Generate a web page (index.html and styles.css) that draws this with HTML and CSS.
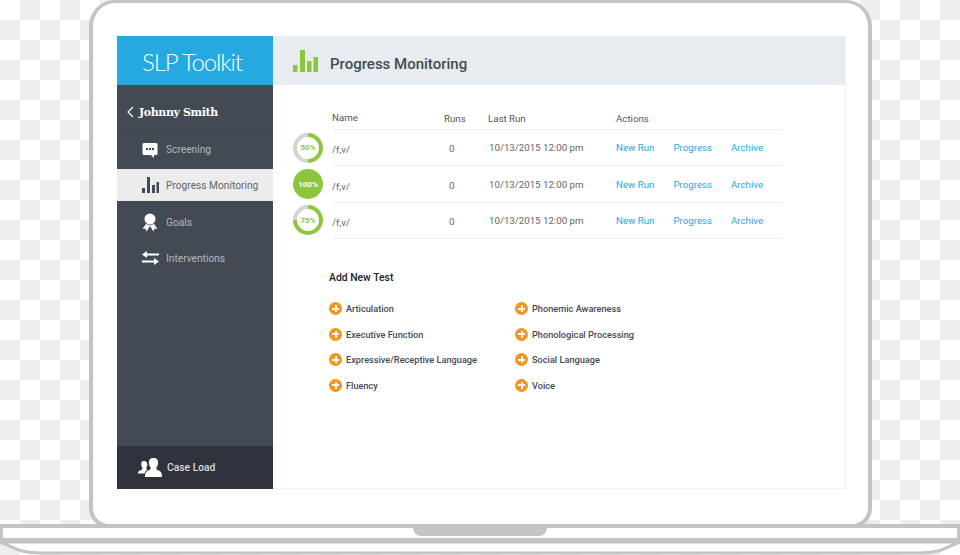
FILE: index.html
```html
<!DOCTYPE html>
<html lang="en">
  <head>
    <meta charset="UTF-8" />
    <title>SLP Toolkit</title>
    <link rel="stylesheet" href="styles.css">
  </head>
  <body>
    <div class="lid">
      <div class="screen">
        <aside class="sidebar">
          <div class="logo">SLP Toolkit</div>
          <div class="patient">
            <svg class="chevron" viewBox="0 0 7 12"><path d="M6 1 1 6l5 5" /></svg>
            <span>Johnny Smith</span>
          </div>
          <nav class="nav">
            <a class="nav-item nav-first">
              <span class="nav-icon">
                <svg width="16" height="16" viewBox="0 0 16 16"><path fill="#fff" d="M2 1h12a1.500 1.500 0 0 1 1.500 1.500v9A1.500 1.500 0 0 1 14 13h-2v3l-3-3H2A1.500 1.500 0 0 1 .5 11.500v-9A1.500 1.500 0 0 1 2 1z" /><path fill="#434a54" d="M4 6h2v2H4zM7 6h2v2H7zM10 6h2v2h-2z" /></svg>
              </span>
              Screening
            </a>
            <a class="nav-item active">
              <span class="nav-icon">
                <svg width="17" height="16" viewBox="0 0 17 16"><path fill="#434a54" d="M0 11h3v5H0zM5 0h3v16H5zM10 8h3v8h-3zM14.500 5h2.500v11h-2.500z" /></svg>
              </span>
              Progress Monitoring
            </a>
            <a class="nav-item">
              <span class="nav-icon">
                <svg width="16" height="19" viewBox="0 0 16 19"><circle cx="8" cy="6" r="5.500" fill="#fff" /><path fill="#fff" d="M4 11 .5 16l3-.5 1 3L8 13l3.500 5.500 1-3 3 .5L12 11l-4 1.500z" /></svg>
              </span>
              Goals
            </a>
            <a class="nav-item">
              <span class="nav-icon">
                <svg width="17" height="14" viewBox="0 0 17 14"><path fill="#fff" d="M5 0v2.500h12v2H5V7L0 3.500zM12 7v2.500H0v2h12V14l5-3.500z" /></svg>
              </span>
              Interventions
            </a>
          </nav>
          <div class="caseload">
            <svg width="24" height="19" viewBox="0 0 24 19"><path fill="#fff" d="M5.500 3C3.500 3 3 5 3.300 7c.2 1.500.7 2.500 1.200 3 0 1-.5 1.500-2 2.200C1 12.800 0 13.500 0 15.500h6.500c.5-1.800 1.500-2.700 3-3.400-1-.8-1.300-1.300-1.300-2.100.6-.7 1-1.700 1.100-3 .1-2-.8-4-3.800-4z" /><path fill="#fff" d="M15 0c-3 0-4.300 2.300-4.100 5 .2 2 .8 3.600 1.800 4.600.2 1.500-.6 2.300-2.300 3C8.500 13.400 7 14.500 7 19h17c0-4.500-1.500-5.600-3.400-6.400-1.700-.7-2.500-1.500-2.300-3 1-1 1.600-2.600 1.800-4.600.2-2.700-1.100-5-4.100-5z" /></svg>
            <span>Case Load</span>
          </div>
        </aside>

        <main class="content">
          <header class="content-head">
            <svg width="25" height="22" viewBox="0 0 25 22"><path fill="#8cc63f" d="M0 15h4.500v7H0zM7 0h5v22H7zM14 11h4.500v11H14zM20.500 7H25v15h-4.500z" /></svg>
            <h1>Progress Monitoring</h1>
          </header>

          <div class="content-body">
            <table class="tests">
              <thead>
                <tr>
                  <th class="col-ring"></th>
                  <th class="col-name">Name</th>
                  <th class="col-runs">Runs</th>
                  <th class="col-date">Last Run</th>
                  <th class="col-actions">Actions</th>
                </tr>
              </thead>
              <tbody>
                <tr>
                  <td class="col-ring"><span class="ring ring-50"><span>50%</span></span></td>
                  <td class="col-name">/f,v/</td>
                  <td class="col-runs">0</td>
                  <td class="col-date">10/13/2015 12:00 pm</td>
                  <td class="col-actions"><a>New Run</a><a>Progress</a><a>Archive</a></td>
                </tr>
                <tr>
                  <td class="col-ring"><span class="ring ring-100"><span>100%</span></span></td>
                  <td class="col-name">/f,v/</td>
                  <td class="col-runs">0</td>
                  <td class="col-date">10/13/2015 12:00 pm</td>
                  <td class="col-actions"><a>New Run</a><a>Progress</a><a>Archive</a></td>
                </tr>
                <tr>
                  <td class="col-ring"><span class="ring ring-75"><span>75%</span></span></td>
                  <td class="col-name">/f,v/</td>
                  <td class="col-runs">0</td>
                  <td class="col-date">10/13/2015 12:00 pm</td>
                  <td class="col-actions"><a>New Run</a><a>Progress</a><a>Archive</a></td>
                </tr>
              </tbody>
            </table>

            <h2>Add New Test</h2>
            <ul class="add-list">
              <li><span class="plus"></span>Articulation</li>
              <li><span class="plus"></span>Phonemic Awareness</li>
              <li><span class="plus"></span>Executive Function</li>
              <li><span class="plus"></span>Phonological Processing</li>
              <li><span class="plus"></span>Expressive/Receptive Language</li>
              <li><span class="plus"></span>Social Language</li>
              <li><span class="plus"></span>Fluency</li>
              <li><span class="plus"></span>Voice</li>
            </ul>
          </div>
        </main>
      </div>
    </div>

    <div class="base">
      <div class="notch"></div>
    </div>
    <svg class="lip" width="960" height="13" viewBox="0 0 960 13">
      <path d="M0 0 20 8.500Q29 11 40 11H920Q931 11 940 8.500L960 0Z" />
    </svg>
  </body>
</html>
```

FILE: styles.css
```css
html,
body {
  height: 555px;
}

body {
  margin: 0;
  overflow: hidden;
  font-family: Roboto, "Liberation Sans", sans-serif;
  background: repeating-conic-gradient(#eee 0 25%, #fff 0 50%) 0 0 / 40px 40px;
  color: #434a54;
}

/* laptop frame */
.lid {
  box-sizing: border-box;
  width: 783px;
  height: 528px;
  margin-left: 89px;
  padding: 33px 0 0 24px;
  background: #fff;
  border: 4px solid #c4c4c4;
  border-top-width: 3px;
  border-radius: 26px 26px 20px 20px;
}

.base {
  box-sizing: border-box;
  display: flex;
  justify-content: center;
  height: 18px;
  margin-top: -4px;
  background: #fff;
  border: 4px solid #c4c4c4;
  border-left-width: 3px;
  border-right-width: 3px;
}

.notch {
  width: 134px;
  height: 8px;
  background: #c4c4c4;
  border-radius: 0 0 8px 8px;
}

.lip {
  display: block;
}

.lip path {
  fill: #fff;
  stroke: #c4c4c4;
  stroke-width: 3;
}

.screen {
  display: flex;
  width: 729px;
  height: 453px;
}

/* sidebar */
.sidebar {
  display: flex;
  flex-direction: column;
  width: 156px;
  background: #434a54;
}

.logo {
  box-sizing: border-box;
  height: 49px;
  padding-right: 6px;
  background: #25a9e0;
  color: #fff;
  font-family: Lato, sans-serif;
  font-weight: 300;
  font-size: 24px;
  letter-spacing: -1.100px;
  line-height: 52px;
  text-align: center;
}

.patient {
  box-sizing: border-box;
  display: flex;
  align-items: center;
  gap: 5px;
  height: 48px;
  padding: 7px 0 0 10px;
  border-bottom: 1px solid #3e454e;
  color: #fff;
  font-family: "DejaVu Serif", serif;
  font-weight: 700;
  font-size: 11px;
  letter-spacing: -0.400px;
}

.chevron {
  width: 7px;
  height: 12px;
  fill: none;
  stroke: #fff;
  stroke-width: 1.200;
}

.nav {
  display: flex;
  flex-direction: column;
}

.nav-item {
  display: flex;
  align-items: center;
  height: 36px;
  padding-left: 24px;
  font-size: 10.200px;
  color: #b4b8bd;
}

.nav-first {
  box-sizing: border-box;
  padding-bottom: 3px;
}

.nav-icon {
  display: flex;
  justify-content: center;
  width: 18px;
  margin-right: 7px;
}

.nav-item.active {
  height: 32px;
  margin-bottom: 3px;
  background: #ececec;
  color: #60666e;
}

.caseload {
  display: flex;
  align-items: center;
  gap: 5px;
  height: 43px;
  margin-top: auto;
  padding-left: 21px;
  background: #2e333d;
  color: #ddd;
  font-size: 10.300px;
  font-weight: 500;
}

/* main area */
.content {
  display: flex;
  flex-direction: column;
  flex: 1;
  border-right: 1px solid #f1f1f1;
  border-bottom: 1px solid #f1f1f1;
}

.content-head {
  display: flex;
  align-items: center;
  gap: 12px;
  height: 49px;
  padding-left: 20px;
  background: #e6ecef;
}

.content-head h1 {
  margin: 6px 0 0;
  font-size: 15px;
  font-weight: 500;
}

.content-body {
  padding: 20px 0 0 20px;
}

.tests {
  width: 490px;
  border-collapse: separate;
  border-spacing: 0;
  table-layout: fixed;
  font-size: 9.700px;
}

.tests th {
  box-sizing: border-box;
  height: 25px;
  padding: 2px 0 0;
  font-weight: 400;
  text-align: left;
  color: #555;
  border-bottom: 1px solid #eee;
}

.tests td {
  box-sizing: border-box;
  height: 36.400px;
  padding: 0;
  color: #666;
  border-bottom: 1px solid #eee;
}

.tests .col-ring {
  width: 39px;
  border: 0;
}

.col-name {
  width: 112px;
}

.col-runs {
  width: 44px;
}

.col-date {
  width: 128px;
}

.tests td.col-name {
  padding-top: 4px;
}

.tests th.col-name {
  padding: 0;
}

.tests td.col-runs {
  padding: 2px 0 0 5px;
}

.tests td.col-date {
  padding-left: 1px;
}

.col-actions {
  white-space: nowrap;
}

.col-actions a {
  display: inline-block;
  width: 57.500px;
  color: #25a9e0;
}

.ring {
  display: flex;
  align-items: center;
  justify-content: center;
  width: 30px;
  height: 30px;
  margin-top: -1px;
  border-radius: 50%;
}

.ring span {
  display: flex;
  align-items: center;
  justify-content: center;
  width: 22px;
  height: 22px;
  border-radius: 50%;
  background: #fff;
  color: #8cc63f;
  font-size: 8px;
  font-weight: 700;
}

.ring-50 {
  background: conic-gradient(#8cc63f 50%, #d4d4d4 0);
}

.ring-75 {
  background: conic-gradient(#8cc63f 75%, #d4d4d4 0);
}

.ring-100 {
  background: #8cc63f;
}

.ring-100 span {
  background: transparent;
  color: #fff;
}

/* add new test */
.content-body h2 {
  margin: 32px 0 0 36px;
  font-size: 10.400px;
  font-weight: 500;
  line-height: 13px;
  color: #222;
}

.add-list {
  display: grid;
  grid-template-columns: 186px 1fr;
  grid-auto-rows: 25.500px;
  margin: 12px 0 0 36px;
  padding: 0;
  list-style: none;
  font-size: 9.200px;
  font-weight: 500;
}

.add-list li {
  display: flex;
  align-items: center;
}

.plus {
  position: relative;
  width: 13px;
  height: 13px;
  margin-right: 4px;
  border-radius: 50%;
  background: #f7941e;
}

.plus::before,
.plus::after {
  content: "";
  position: absolute;
  background: #fff;
}

.plus::before {
  left: 3px;
  top: 5.500px;
  width: 7px;
  height: 2px;
}

.plus::after {
  left: 5.500px;
  top: 3px;
  width: 2px;
  height: 7px;
}
```
